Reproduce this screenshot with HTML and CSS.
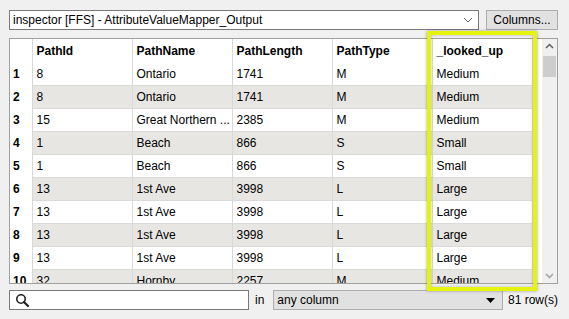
FILE: index.html
```html
<!DOCTYPE html>
<html lang="en">
<head>
    <meta charset="UTF-8">
    <title>Inspector</title>
    <link rel="stylesheet" href="styles.css">
</head>
<body>
    <div class="app">
        <div class="toolbar">
            <div class="combo">
                <span class="combo-text">inspector [FFS] - AttributeValueMapper_Output</span>
                <svg class="chevron" width="10" height="6" viewBox="0 0 10 6"><path d="M1 1 L5 5 L9 1" fill="none" stroke="#606060" stroke-width="1"/></svg>
            </div>
            <div class="button">Columns...</div>
        </div>

        <div class="frame">
            <div class="viewport">
                <table class="grid">
                    <colgroup>
                        <col class="c-num"><col class="c-data"><col class="c-data"><col class="c-data"><col class="c-data"><col class="c-data">
                    </colgroup>
                    <thead>
                        <tr><th class="num"></th><th>PathId</th><th>PathName</th><th>PathLength</th><th>PathType</th><th>_looked_up</th></tr>
                    </thead>
                    <tbody>
                        <tr><td class="num">1</td><td>8</td><td>Ontario</td><td>1741</td><td>M</td><td>Medium</td></tr>
                        <tr class="alt"><td class="num">2</td><td>8</td><td>Ontario</td><td>1741</td><td>M</td><td>Medium</td></tr>
                        <tr><td class="num">3</td><td>15</td><td>Great Northern ...</td><td>2385</td><td>M</td><td>Medium</td></tr>
                        <tr class="alt"><td class="num">4</td><td>1</td><td>Beach</td><td>866</td><td>S</td><td>Small</td></tr>
                        <tr><td class="num">5</td><td>1</td><td>Beach</td><td>866</td><td>S</td><td>Small</td></tr>
                        <tr class="alt"><td class="num">6</td><td>13</td><td>1st Ave</td><td>3998</td><td>L</td><td>Large</td></tr>
                        <tr><td class="num">7</td><td>13</td><td>1st Ave</td><td>3998</td><td>L</td><td>Large</td></tr>
                        <tr class="alt"><td class="num">8</td><td>13</td><td>1st Ave</td><td>3998</td><td>L</td><td>Large</td></tr>
                        <tr><td class="num">9</td><td>13</td><td>1st Ave</td><td>3998</td><td>L</td><td>Large</td></tr>
                        <tr class="alt"><td class="num">10</td><td>32</td><td>Hornby</td><td>2257</td><td>M</td><td>Medium</td></tr>
                    </tbody>
                </table>
            </div>
            <div class="scrollbar">
                <svg class="arrow" width="15" height="15" viewBox="0 0 15 15"><path d="M4 9 L7.5 5.5 L11 9" fill="none" stroke="#606060" stroke-width="1.5"/></svg>
                <div class="track"><div class="thumb"></div></div>
                <svg class="arrow" width="15" height="15" viewBox="0 0 15 15"><path d="M4 6 L7.5 9.5 L11 6" fill="none" stroke="#a0a0a0" stroke-width="1.5"/></svg>
            </div>
            <div class="highlight"></div>
        </div>

        <div class="footer">
            <div class="search">
                <svg width="15" height="15" viewBox="0 0 15 15"><circle cx="6" cy="6" r="4.2" fill="none" stroke="#222" stroke-width="1.6"/><path d="M9 9 L13 13" stroke="#222" stroke-width="2.2" stroke-linecap="round"/></svg>
            </div>
            <span class="in">in</span>
            <div class="select">
                <span>any column</span>
                <svg width="9" height="5" viewBox="0 0 9 5"><path d="M0 0 L9 0 L4.5 5 Z" fill="#000"/></svg>
            </div>
            <span class="count">81 row(s)</span>
        </div>
    </div>
</body>
</html>
```

FILE: styles.css
```css
*{
    margin:0;
    padding:0;
    box-sizing:border-box;
}
body{
    background:#f0f0f0;
    font-family:"Liberation Sans", Arial, sans-serif;
    font-size:12px;
    color:#000;
}
.app{
    padding:10px 11px 0 9px;
}

.toolbar{
    display:flex;
    gap:7px;
    height:20px;
}
.combo{
    flex:1;
    display:flex;
    align-items:center;
    justify-content:space-between;
    background:#fff;
    border:1px solid #7a7a7a;
    padding:0 4px 0 3px;
    height:20px;
}
.chevron{
    margin-right:1px;
}
.button{
    width:72px;
    display:flex;
    align-items:center;
    justify-content:center;
    background:#e1e1e1;
    border:1px solid #adadad;
}

.frame{
    position:relative;
    margin-top:8px;
    height:246px;
    border:1px solid #a0a0a0;
    background:#fff;
    display:flex;
}
.viewport{
    flex:1;
    overflow:hidden;
}
.grid{
    border-collapse:collapse;
    table-layout:fixed;
    width:522px;
}
.c-num{ width:22px; }
.c-data{ width:100px; }
.grid th,
.grid td{
    height:23px;
    text-align:left;
    padding:1px 0 0 4px;
    white-space:nowrap;
    overflow:hidden;
    border-right:1px solid #d9d9d9;
}
.grid th{
    font-weight:bold;
    background:#fff;
}
.grid td{
    border-bottom:1px solid #dadada;
}
.grid tr.alt td{
    background:#e8e6e3;
}
.grid .num,
.grid tr.alt td.num{
    background:#fff;
    font-weight:bold;
    border-bottom:none;
    padding-left:3px;
}

.scrollbar{
    width:15px;
    display:flex;
    flex-direction:column;
    background:#f0f0f0;
}
.track{
    flex:1;
    padding:2px 1px;
}
.thumb{
    height:21px;
    background:#cdcdcd;
}

.highlight{
    position:absolute;
    left:417px;
    top:-8px;
    width:110px;
    height:260px;
    border:4px solid #e4f40e;
    box-shadow:0 0 3px rgba(0,0,0,0.35), inset 0 0 3px rgba(0,0,0,0.25);
    pointer-events:none;
}

.footer{
    display:flex;
    align-items:center;
    margin-top:6px;
    height:20px;
}
.search{
    width:240px;
    height:20px;
    background:#fff;
    border:1px solid #7a7a7a;
    display:flex;
    align-items:center;
    padding-left:5px;
}
.in{
    margin:0 9px 0 6px;
}
.select{
    flex:1;
    height:20px;
    background:#e1e1e1;
    border:1px solid #adadad;
    display:flex;
    align-items:center;
    justify-content:space-between;
    padding:0 7px 0 3px;
}
.count{
    margin-left:5px;
    white-space:nowrap;
}
```
